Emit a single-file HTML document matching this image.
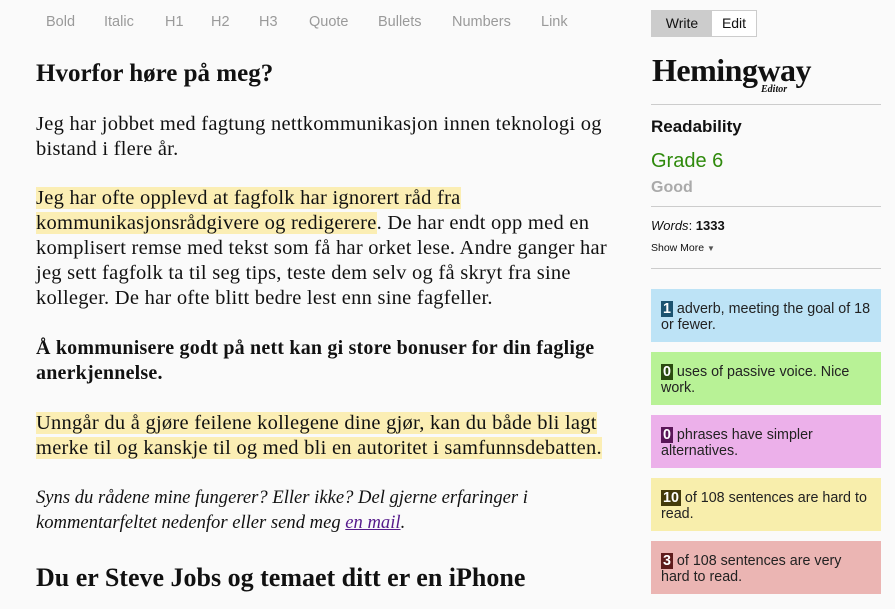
<!DOCTYPE html>
<html><head><meta charset="utf-8"><style>
body{margin:0;width:895px;height:609px;background:#fafafa;overflow:hidden;position:relative;font-family:"Liberation Sans",sans-serif;color:#111}
.tb{position:absolute;top:14px;font-size:14.5px;color:#9a9a9a}
.ed{position:absolute;left:36px;top:0;font-family:"Liberation Serif",serif;font-size:20.5px;letter-spacing:0.25px;line-height:25px;white-space:nowrap;color:#111}
.ed div{position:absolute;left:0}
.hl{background:#fbeeb4}
.btns{position:absolute;left:651px;top:10px;height:27px;width:106px;border:1px solid #ccc;background:#ccc;box-sizing:border-box;font-size:14px}
.btns span{position:absolute;top:0;height:25px;line-height:25px;text-align:center}
.hr{position:absolute;left:651px;width:230px;height:1px;background:#ccc}
.box{position:absolute;left:651px;width:230px;height:53px;box-sizing:border-box;padding:12px 10px 0 10px;font-size:14.3px;line-height:16px;color:#222}
.b{color:#fff;font-weight:bold;padding:0 2px}
</style></head><body>
<span class="tb" style="left:46px">Bold</span>
<span class="tb" style="left:104px">Italic</span>
<span class="tb" style="left:165px">H1</span>
<span class="tb" style="left:211px">H2</span>
<span class="tb" style="left:259px">H3</span>
<span class="tb" style="left:309px">Quote</span>
<span class="tb" style="left:378px">Bullets</span>
<span class="tb" style="left:452px">Numbers</span>
<span class="tb" style="left:541px">Link</span>

<div class="ed">
<div style="top:59px;font-size:25px;font-weight:bold;line-height:30px;letter-spacing:0">Hvorfor høre på meg?</div>
<div style="top:112px">Jeg har jobbet med fagtung nettkommunikasjon innen teknologi og<br>bistand i flere år.</div>
<div style="top:186px"><span class="hl">Jeg har ofte opplevd at fagfolk har ignorert råd fra </span><br><span class="hl">kommunikasjonsrådgivere og redigerere</span>. De har endt opp med en<br>komplisert remse med tekst som få har orket lese. Andre ganger har<br>jeg sett fagfolk ta til seg tips, teste dem selv og få skryt fra sine<br>kolleger. De har ofte blitt bedre lest enn sine fagfeller.</div>
<div style="top:336px;font-weight:bold;font-size:20px;letter-spacing:0.2px">Å kommunisere godt på nett kan gi store bonuser for din faglige<br>anerkjennelse.</div>
<div style="top:411px"><span class="hl">Unngår du å gjøre feilene kollegene dine gjør, kan du både bli lagt </span><br><span class="hl">merke til og kanskje til og med bli en autoritet i samfunnsdebatten.</span></div>
<div style="top:485px;font-style:italic;font-size:18.6px;letter-spacing:0">Syns du rådene mine fungerer? Eller ikke? Del gjerne erfaringer i<br>kommentarfeltet nedenfor eller send meg <u style="color:#551a8b">en mail</u>.</div>
<div style="top:563px;font-size:26px;font-weight:bold;line-height:30px;letter-spacing:0">Du er Steve Jobs og temaet ditt er en iPhone</div>
</div>

<div class="btns"><span style="left:0;width:60px">Write</span><span style="left:60px;width:44px;background:#fff">Edit</span></div>
<div style="position:absolute;left:652px;top:52px;font-family:'Liberation Serif',serif;font-weight:bold;font-size:32px;letter-spacing:-0.5px">Hemingway</div>
<div style="position:absolute;left:761px;top:84px;font-family:'Liberation Serif',serif;font-weight:bold;font-style:italic;font-size:10px">Editor</div>
<div class="hr" style="top:104px"></div>
<div style="position:absolute;left:651px;top:117px;font-size:17px;font-weight:bold">Readability</div>
<div style="position:absolute;left:651px;top:150px;font-size:20px;color:#2f8a0c">Grade 6</div>
<div style="position:absolute;left:651px;top:179px;font-size:16px;font-weight:bold;color:#aaa">Good</div>
<div class="hr" style="top:206px"></div>
<div style="position:absolute;left:651px;top:218px;font-size:13px"><i>Words</i>: <b>1333</b></div>
<div style="position:absolute;left:651px;top:242px;font-size:10.5px">Show More <span style="font-size:8px;color:#555">▼</span></div>
<div class="hr" style="top:268px"></div>

<div class="box" style="top:289px;background:#bde3f6"><span class="b" style="background:#1c5370">1</span> adverb, meeting the goal of 18 or fewer.</div>
<div class="box" style="top:352px;background:#b8f296"><span class="b" style="background:#2a4a0e">0</span> uses of passive voice. Nice work.</div>
<div class="box" style="top:415px;background:#ecb0ea"><span class="b" style="background:#5a1658">0</span> phrases have simpler alternatives.</div>
<div class="box" style="top:478px;background:#f8eeac"><span class="b" style="background:#433a0b">10</span> of 108 sentences are hard to read.</div>
<div class="box" style="top:541px;background:#ebb5b3"><span class="b" style="background:#5e1b1b">3</span> of 108 sentences are very<br>hard to read.</div>
</body></html>
